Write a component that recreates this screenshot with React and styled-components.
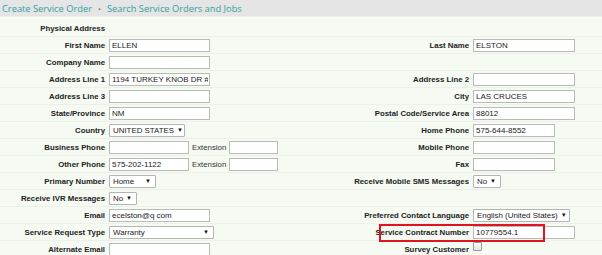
import React from 'react'
import styled, { createGlobalStyle } from 'styled-components'

const GlobalStyle = createGlobalStyle`
  html, body {
    margin: 0;
    padding: 0;
    background: #f5faf3;
  }
  body {
    font-family: 'Liberation Sans', Arial, sans-serif;
    color: #222;
  }
`

const Page = styled.div`
  width: 602px;
  height: 255px;
  overflow: hidden;
  background: #f5faf3;
`

const NavBar = styled.div`
  height: 16px;
  display: flex;
  align-items: center;
  gap: 6px;
  padding-left: 2px;
  background: #e4e5e4;
  border-bottom: 1px solid #f0f0f0;
  font-family: 'Open Sans', 'Liberation Sans', sans-serif;
  font-size: 9.3px;
  color: #35a0a0;
`

const NavLink = styled.span`
  white-space: nowrap;
`

const NavDot = styled.span`
  color: #777;
  font-size: 8px;
`

const Form = styled.div`
  padding-top: 3px;
`

const Row = styled.div`
  position: relative;
  height: 17px;
  display: grid;
  grid-template-columns: 105px 178px 190px 1fr;
  align-items: center;
  border-bottom: 1px solid ${(p) => (p.$last ? 'transparent' : '#ebf1e9')};
  box-sizing: border-box;
`

const Label = styled.div`
  font-size: 7.8px;
  font-weight: bold;
  text-align: right;
  white-space: nowrap;
  padding-right: ${(p) => (p.$right ? '4px' : '0')};
`

const Field = styled.div`
  display: flex;
  align-items: center;
  gap: 3px;
  padding-left: ${(p) => (p.$right ? '0' : '4px')};
`

const Input = styled.input`
  box-sizing: border-box;
  width: ${(p) => p.$w}px;
  height: 13px;
  margin: 0;
  padding: 0 1px 0 2px;
  border: 1px solid #b9bbb9;
  background: #fff;
  font-family: 'Liberation Sans', Arial, sans-serif;
  font-size: 8px;
  color: #222;
  outline: none;
`

const SmallText = styled.span`
  font-size: 7.8px;
  color: #333;
`

const SelectBox = styled.div`
  box-sizing: border-box;
  width: ${(p) => p.$w}px;
  height: 13px;
  display: flex;
  align-items: center;
  justify-content: space-between;
  padding: 0 4px 0 3px;
  border: 1px solid #b3b5b3;
  border-radius: 1px;
  background: #fff;
  font-size: 7.9px;
  color: #222;
  white-space: nowrap;
  overflow: hidden;
`

const Arrow = styled.span`
  font-size: 6px;
  color: #111;
  margin-left: 3px;
`

const Checkbox = styled.span`
  display: inline-block;
  width: 7px;
  height: 7px;
  margin-top: -5px;
  border: 1px solid #9a9c9a;
  border-radius: 1px;
  background: linear-gradient(#fff, #e3e3e3);
`

const Highlight = styled.div`
  position: absolute;
  left: 379px;
  top: 0;
  width: 166px;
  height: 18px;
  box-sizing: border-box;
  border: 2px solid #e2131f;
  pointer-events: none;
`

const Select = ({ w, value }) => (
  <SelectBox $w={w}>
    <span>{value}</span>
    <Arrow>▼</Arrow>
  </SelectBox>
)

const Text = ({ w = 101, value = '' }) => <Input $w={w} value={value} readOnly />

const rows = [
  { l: 'Physical Address', lf: null, r: '', rf: null },
  { l: 'First Name', lf: <Text value='ELLEN' />, r: 'Last Name', rf: <Text w={102} value='ELSTON' /> },
  { l: 'Company Name', lf: <Text />, r: '', rf: null },
  { l: 'Address Line 1', lf: <Text value='1194 TURKEY KNOB DR # N' />, r: 'Address Line 2', rf: <Text w={102} /> },
  { l: 'Address Line 3', lf: <Text />, r: 'City', rf: <Text w={102} value='LAS CRUCES' /> },
  { l: 'State/Province', lf: <Text value='NM' />, r: 'Postal Code/Service Area', rf: <Text w={102} value='88012' /> },
  { l: 'Country', lf: <Select w={76} value='UNITED STATES' />, r: 'Home Phone', rf: <Text w={82} value='575-644-8552' /> },
  {
    l: 'Business Phone',
    lf: (
      <>
        <Text w={80} />
        <SmallText>Extension</SmallText>
        <Text w={49} />
      </>
    ),
    r: 'Mobile Phone',
    rf: <Text w={82} />,
  },
  {
    l: 'Other Phone',
    lf: (
      <>
        <Text w={80} value='575-202-1122' />
        <SmallText>Extension</SmallText>
        <Text w={49} />
      </>
    ),
    r: 'Fax',
    rf: <Text w={82} />,
  },
  { l: 'Primary Number', lf: <Select w={47} value='Home' />, r: 'Receive Mobile SMS Messages', rf: <Select w={28} value='No' /> },
  { l: 'Receive IVR Messages', lf: <Select w={28} value='No' />, r: '', rf: null },
  { l: 'Email', lf: <Text value='ecelston@q com' />, r: 'Preferred Contact Language', rf: <Select w={97} value='English (United States)' /> },
  { l: 'Service Request Type', lf: <Select w={105} value='Warranty' />, r: 'Service Contract Number', rf: <Text w={102} value='10779554.1' />, mark: true },
  { l: 'Alternate Email', lf: <Text />, r: 'Survey Customer', rf: <Checkbox /> },
]

const App = () => (
  <Page>
    <GlobalStyle />
    <NavBar>
      <NavLink>Create Service Order</NavLink>
      <NavDot>•</NavDot>
      <NavLink>Search Service Orders and Jobs</NavLink>
    </NavBar>
    <Form>
      {rows.map((row, i) => (
        <Row key={row.l} $last={i === rows.length - 1}>
          <Label>{row.l}</Label>
          <Field>{row.lf}</Field>
          <Label $right>{row.r}</Label>
          <Field $right>{row.rf}</Field>
          {row.mark && <Highlight />}
        </Row>
      ))}
    </Form>
  </Page>
)

export default App
